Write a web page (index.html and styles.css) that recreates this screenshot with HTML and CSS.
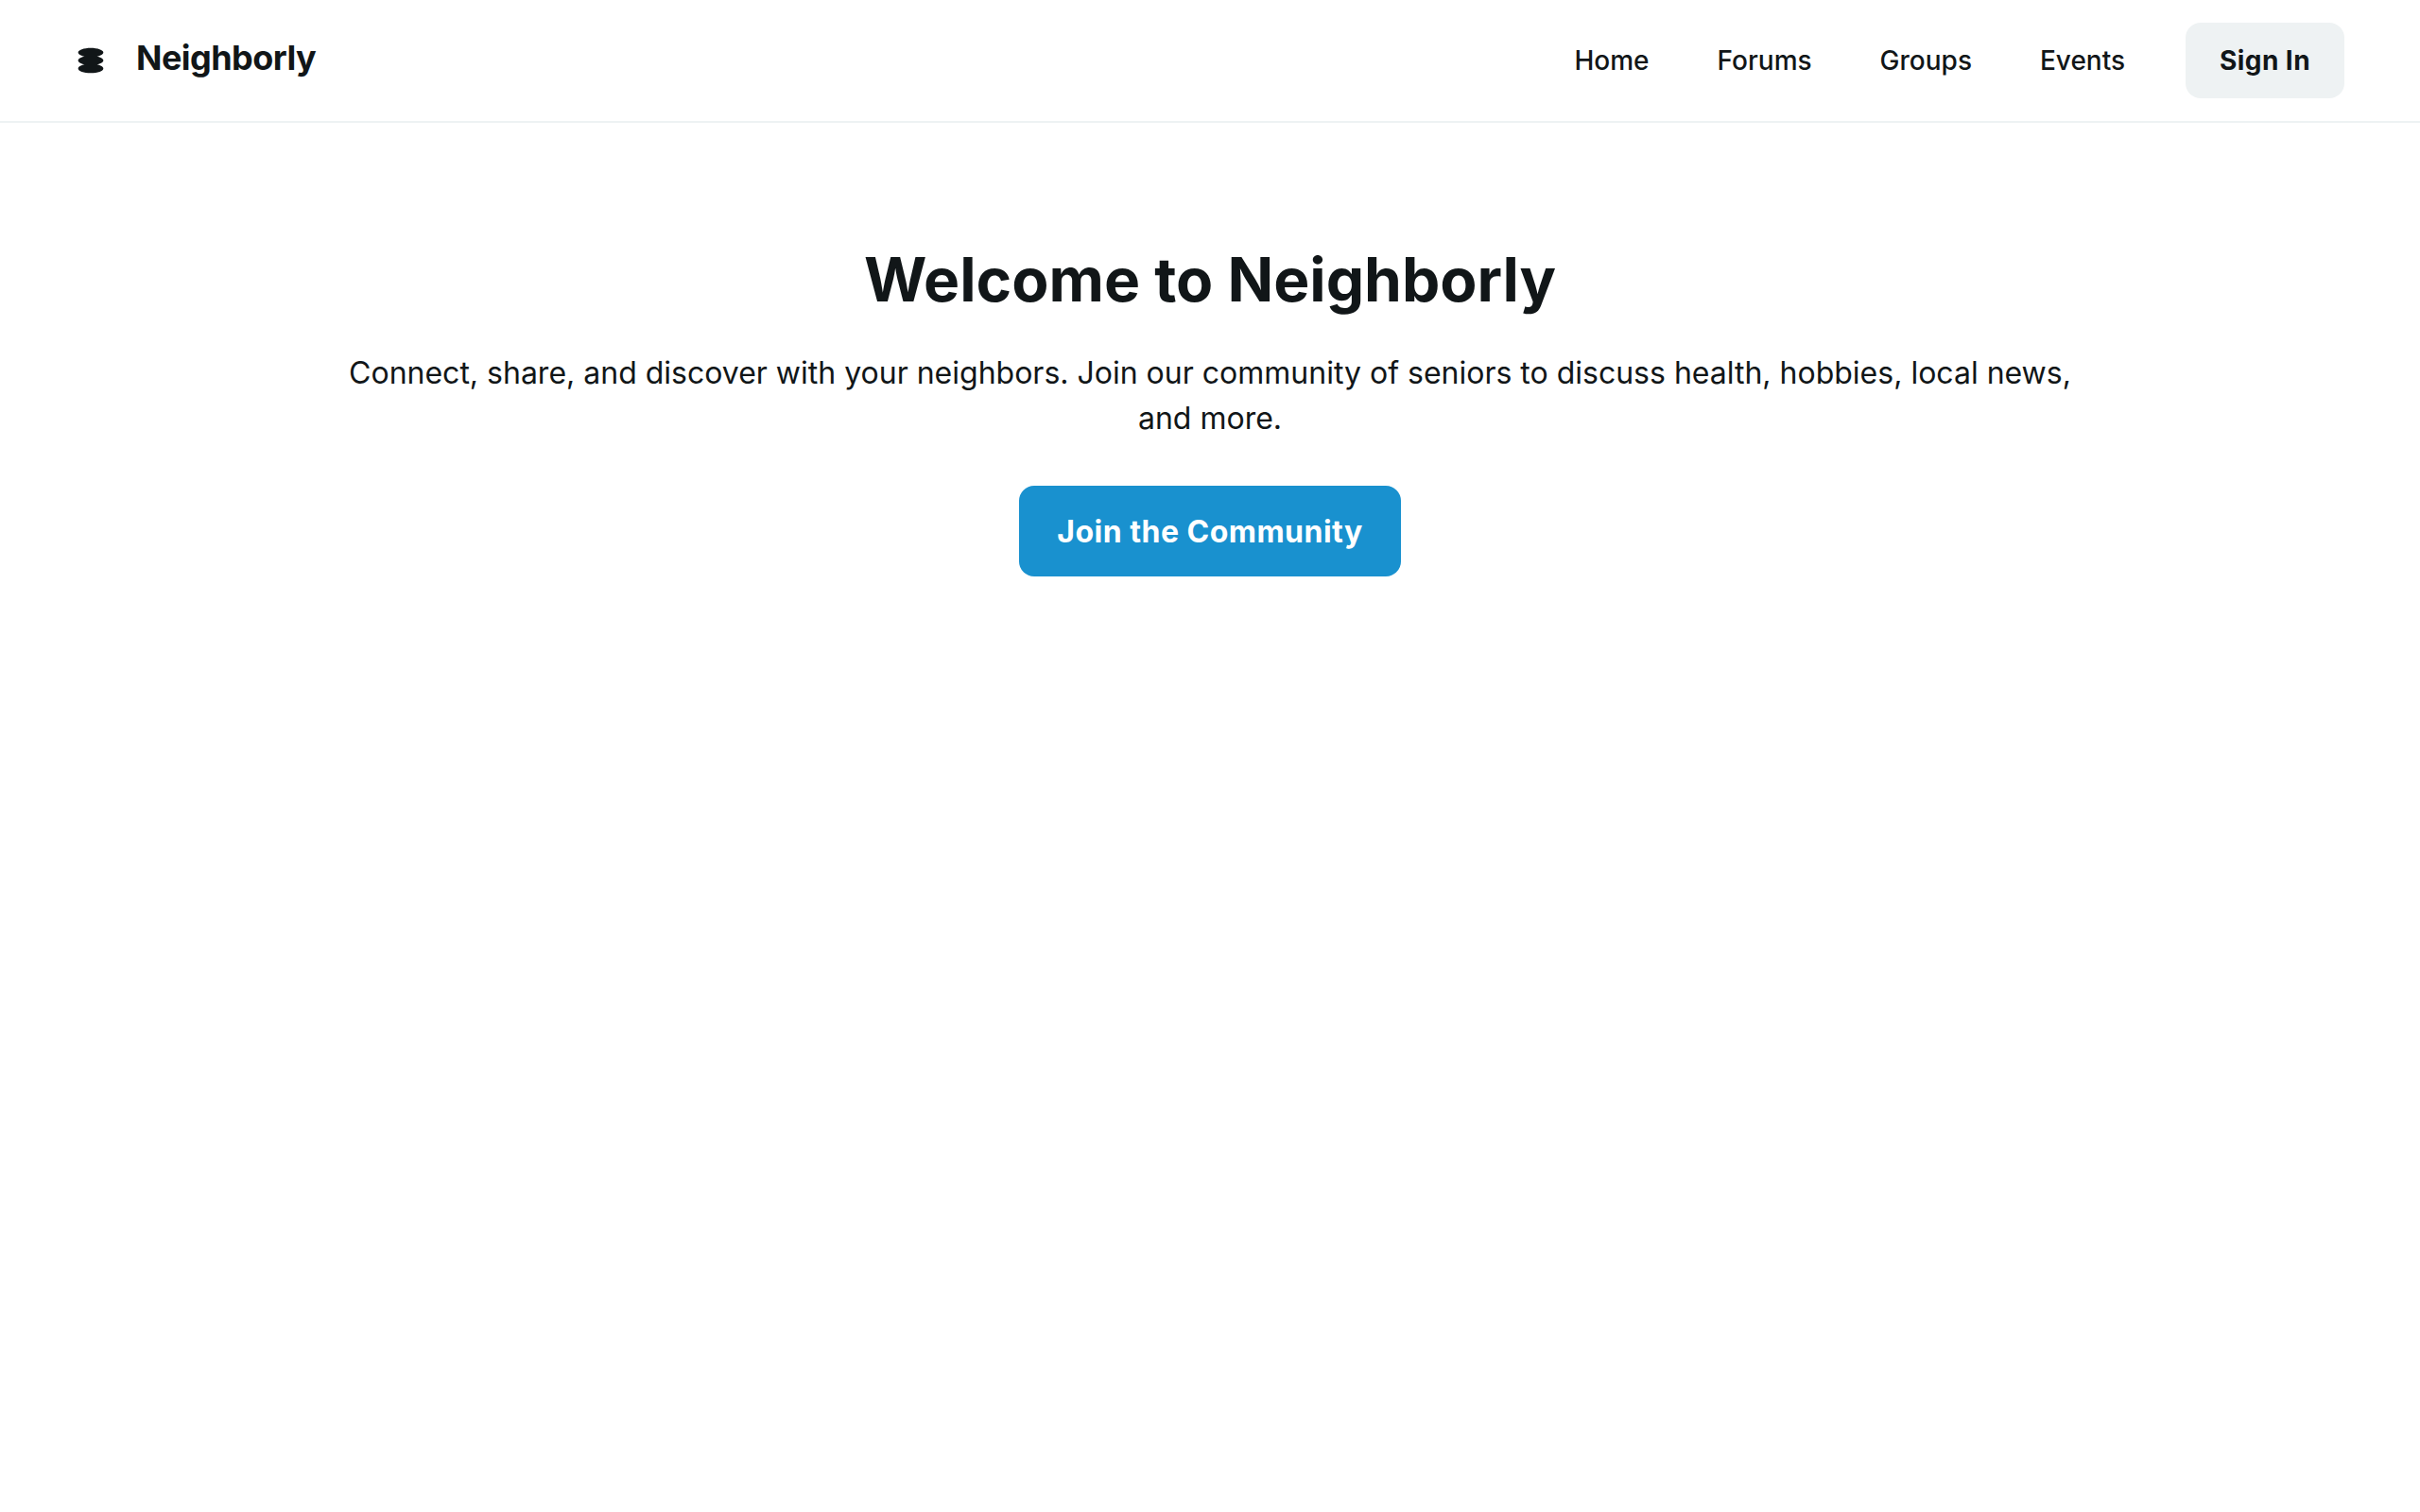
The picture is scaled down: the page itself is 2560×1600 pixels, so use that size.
FILE: index.html
```html
<!DOCTYPE html>
<html lang="en">
<head>
  <meta charset="utf-8">
  <meta name="viewport" content="width=device-width, initial-scale=1">
  <title>Neighborly</title>
  <link rel="stylesheet" href="styles.css">
</head>
<body>
  <header class="site-header">
    <div class="brand">
      <svg class="brand-mark" viewBox="0 0 48 48" fill="currentColor" aria-hidden="true">
        <path d="M44 11.2727C44 14.0109 39.8386 16.3957 33.6967 17.6364C39.8386 18.877 44 21.2618 44 24C44 26.7382 39.8386 29.123 33.6967 30.3636C39.8386 31.6043 44 33.9891 44 36.7273C44 40.7439 35.0457 44 24 44C12.9543 44 4 40.7439 4 36.7273C4 33.9891 8.16144 31.6043 14.3033 30.3636C8.16144 29.123 4 26.7382 4 24C4 21.2618 8.16144 18.877 14.3033 17.6364C8.16144 16.3957 4 14.0109 4 11.2727C4 7.25611 12.9543 4 24 4C35.0457 4 44 7.25611 44 11.2727Z"/>
      </svg>
      <span class="brand-name">Neighborly</span>
    </div>
    <div class="header-actions">
      <nav class="nav" aria-label="Main">
        <a href="#home">Home</a>
        <a href="#forums">Forums</a>
        <a href="#groups">Groups</a>
        <a href="#events">Events</a>
      </nav>
      <button class="button button-quiet" type="button">Sign In</button>
    </div>
  </header>
  <main class="hero">
    <h1 class="hero-title">Welcome to Neighborly</h1>
    <p class="hero-text">Connect, share, and discover with your neighbors. Join our community of seniors to discuss health, hobbies, local news, and more.</p>
    <button class="button button-primary" type="button">Join the Community</button>
  </main>
</body>
</html>
```
FILE: styles.css
```css
*,
*::before,
*::after {
  box-sizing: border-box;
}

body {
  margin: 0;
  min-height: 100vh;
  background: #fff;
  color: #111618;
  font-family: Inter, "Noto Sans", sans-serif;
}

.site-header {
  display: flex;
  align-items: center;
  justify-content: space-between;
  padding: 24px 80px;
  border-bottom: 2px solid #eef2f3;
}

.brand {
  display: flex;
  align-items: center;
  gap: 32px;
}

.brand-mark {
  width: 32px;
  height: 32px;
}

.brand-name {
  padding-bottom: 6px;
  font-size: 36px;
  font-weight: 700;
  line-height: 44px;
  letter-spacing: -0.015em;
}

.header-actions {
  display: flex;
  align-items: center;
  gap: 64px;
}

.nav {
  display: flex;
  gap: 72px;
}

.nav a {
  color: inherit;
  font-size: 28px;
  font-weight: 500;
  line-height: 42px;
  text-decoration: none;
}

.button {
  border: 0;
  border-radius: 16px;
  font-family: inherit;
  font-weight: 700;
  letter-spacing: 0.015em;
  cursor: pointer;
}

.button-quiet {
  height: 80px;
  padding: 0 36px;
  background: #eef2f3;
  color: #111618;
  font-size: 28px;
}

.button-primary {
  height: 96px;
  padding: 0 40px;
  background: #1991cf;
  color: #fff;
  font-size: 32px;
}

.hero {
  display: flex;
  flex-direction: column;
  align-items: center;
  max-width: 1920px;
  margin: 0 auto;
  padding: 126px 32px;
  text-align: center;
}

.hero-title {
  margin: 0 0 35px;
  font-size: 64px;
  font-weight: 700;
  line-height: 80px;
}

.hero-text {
  margin: 0 0 47px;
  font-size: 32px;
  line-height: 48px;
}
```
